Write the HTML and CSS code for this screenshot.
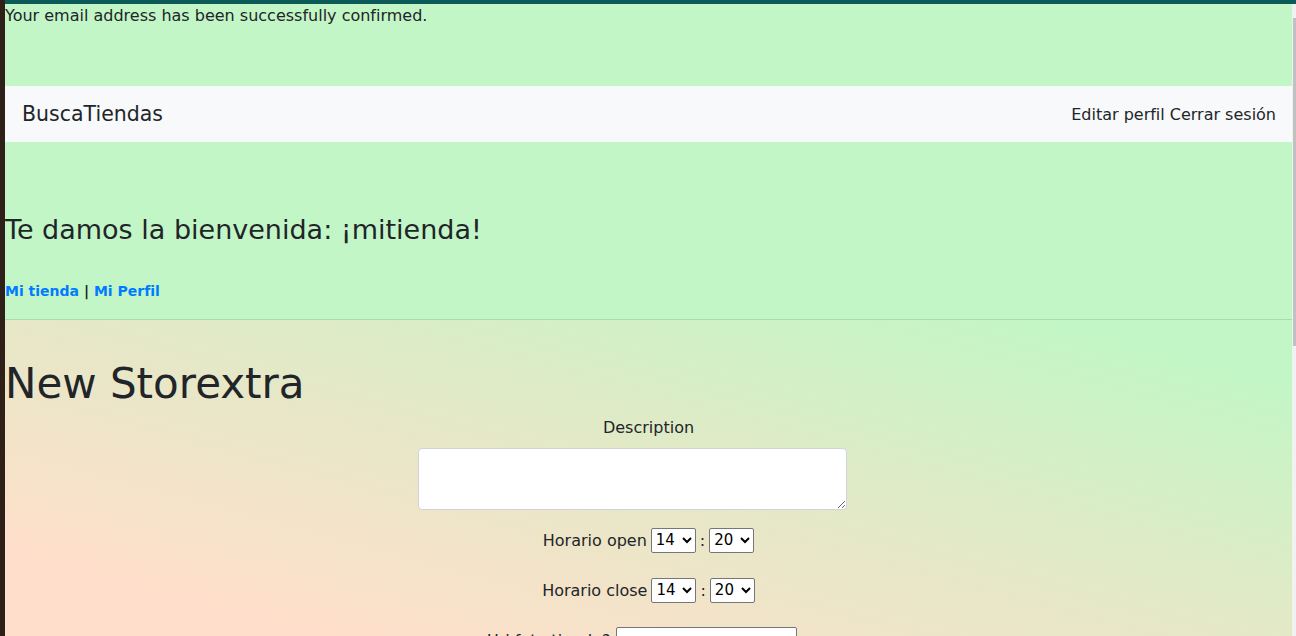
FILE: index.html
```html
<!DOCTYPE html>
<html lang="es">
<head>
<meta charset="utf-8">
<title>BuscaTiendas</title>
<link rel="stylesheet" href="styles.css">
</head>
<body>
<div class="frame">
  <div class="edge-left"></div>
  <div class="window">
    <div class="page">
      <div class="notice">Your email address has been successfully confirmed.</div>
      <nav class="navbar">
        <a class="brand" href="#">BuscaTiendas</a>
        <div class="nav-links">
          <a href="#">Editar perfil</a>
          <a href="#">Cerrar sesión</a>
        </div>
      </nav>
      <section class="welcome">
        <h3 class="welcome-title">Te damos la bienvenida: ¡mitienda!</h3>
        <p class="welcome-links"><a href="#">Mi tienda</a> | <a href="#">Mi Perfil</a></p>
      </section>
      <hr class="divider">
      <section class="store">
        <h1 class="store-title">New Storextra</h1>
        <form class="store-form">
          <label class="field-label" for="desc">Description</label>
          <textarea id="desc" class="desc"></textarea>
          <div class="time-row">
            <span>Horario open</span>
            <select class="sel"><option>14</option></select>
            <span class="colon">:</span>
            <select class="sel"><option>20</option></select>
          </div>
          <div class="time-row">
            <span>Horario close</span>
            <select class="sel"><option>14</option></select>
            <span class="colon">:</span>
            <select class="sel"><option>20</option></select>
          </div>
          <div class="url-row">
            <span class="url-label">¿Url foto tienda?</span>
            <input class="url" type="text">
          </div>
        </form>
      </section>
    </div>
    <div class="scrollbar"><div class="thumb"></div></div>
  </div>
</div>
</body>
</html>
```
FILE: styles.css
```css
* { box-sizing: border-box; }
html, body { margin: 0; padding: 0; }
body {
  font-family: "DejaVu Sans", "Noto Sans", sans-serif;
  color: #212529;
  background: #2e2019;
}
.frame {
  display: flex;
  height: 636px;
  overflow: hidden;
}
.edge-left {
  width: 5px;
  background: #2e2019;
  flex: none;
}
.window {
  flex: 1;
  display: flex;
  border-top: 4px solid #0b5a57;
  min-width: 0;
}
.page {
  flex: 1;
  min-width: 0;
  background: #c3f6c6;
  overflow: hidden;
  display: flex;
  flex-direction: column;
}
.scrollbar {
  width: 4px;
  flex: none;
  background: #f1f1f1;
  padding-top: 14px;
}
.thumb {
  height: 328px;
  margin-left: 1px;
  background: #c1c1c1;
}
.notice {
  height: 82px;
  flex: none;
  font-size: 16px;
  line-height: 24px;
}
.navbar {
  height: 56px;
  flex: none;
  background: #f8f9fa;
  display: flex;
  align-items: center;
  justify-content: space-between;
  padding: 0 16px 0 17px;
}
.navbar a { color: #212529; text-decoration: none; }
.brand { font-size: 20.5px; }
.nav-links { font-size: 16px; display: flex; gap: 5px; }
.welcome { padding-top: 71px; flex: none; }
.welcome-title {
  margin: 0;
  font-size: 27px;
  font-weight: 400;
  line-height: 34px;
}
.welcome-links {
  margin: 32px 0 0;
  font-size: 14px;
  line-height: 24px;
  font-weight: 600;
}
.welcome-links a { color: #007bff; text-decoration: none; }
.divider {
  margin: 16px 0 0;
  flex: none;
  border: 0;
  border-top: 1px solid #a9dcad;
}
.store {
  flex: 1;
  background: linear-gradient(195deg, #c3f6c6 10%, #e2e9c6 45%, #ffdfcb 85%);
}
.store-title {
  margin: 0;
  padding-top: 40px;
  font-size: 42px;
  font-weight: 400;
  line-height: 48px;
}
.store-form {
  display: flex;
  flex-direction: column;
  align-items: center;
  font-size: 16px;
}
.field-label { line-height: 24px; margin-top: 8px; }
.desc {
  width: 429px;
  height: 62px;
  margin-top: 8px;
  margin-right: 33px;
  border: 1px solid #ced4da;
  border-radius: 4px;
  background: #fff;
}
.time-row {
  display: flex;
  align-items: center;
  gap: 4px;
  margin-top: 17px;
  height: 26px;
}
.time-row + .time-row { margin-top: 24px; }
.sel {
  font-family: inherit;
  font-size: 15px;
  height: 25px;
  width: 45px;
  border: 1px solid #767676;
  border-radius: 2px;
  background: #fff;
  color: #000;
}
.url-row {
  display: flex;
  align-items: flex-start;
  gap: 5px;
  margin-top: 24px;
  margin-right: 22px;
}
.url-label { line-height: 24px; padding-top: 2px; }
.url {
  width: 181px;
  height: 26px;
  border: 1px solid #767676;
  border-radius: 2px;
  background: #fff;
}
```
